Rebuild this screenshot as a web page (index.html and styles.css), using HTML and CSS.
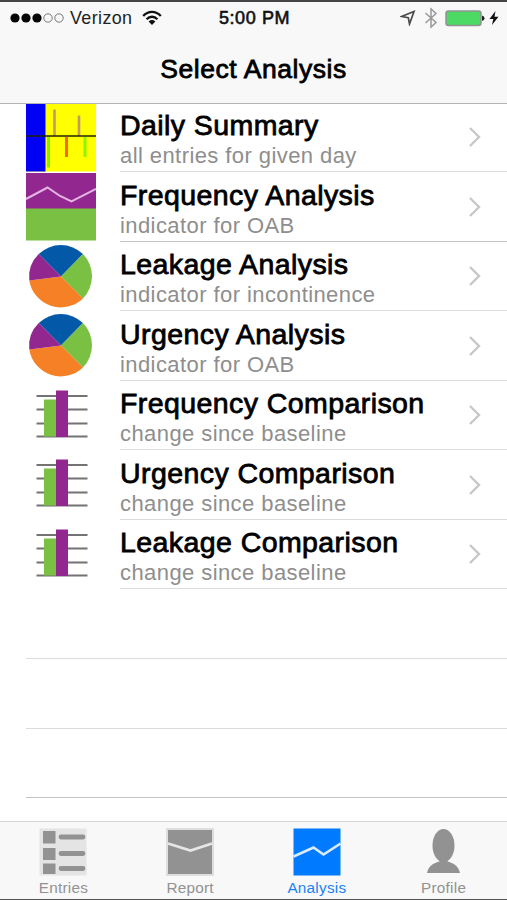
FILE: index.html
```
<!DOCTYPE html>
<html lang="en">
<head>
<meta charset="utf-8">
<title>Select Analysis</title>
<link rel="stylesheet" href="styles.css">
</head>
<body>
<svg class="defs" width="0" height="0">
  <symbol id="chevron" viewBox="0 0 14 22"><path d="M2 2L11 11L2 20" fill="none" stroke="#c7c7cb" stroke-width="2.4"/></symbol>
  <symbol id="daily" viewBox="0 0 70 70">
    <rect width="70" height="68.500" fill="#ff0"/><rect width="19.500" height="68.500" fill="#0000f5"/>
    <path d="M22.500 33V64.500" stroke="#7df000" stroke-width="3"/>
    <path d="M28.500 6.500V33M53 12.500V33" stroke="#c49a62" stroke-width="2.600"/>
    <path d="M40.500 34V54" stroke="#ff6500" stroke-width="3"/>
    <path d="M59 34V54" stroke="#8cf500" stroke-width="3"/>
    <path d="M0 33H70" stroke="#222208" stroke-width="1.600"/>
  </symbol>
  <symbol id="frequency" viewBox="0 0 70 70">
    <rect y="1" width="70" height="36" fill="#92278f"/><rect y="36.500" width="70" height="32" fill="#7ac143"/>
    <path d="M0 27L21.500 15.500L34 24L45.500 29.500L70 17" fill="none" stroke="#e3b5e2" stroke-width="2"/>
  </symbol>
  <symbol id="pie" viewBox="0 0 70 70">
    <path d="M35 34.500L12.700 12A32 32 0 0 1 57 12Z" fill="#0359a8"/>
    <path d="M35 34.500L57 12A32 32 0 0 1 57 56.500Z" fill="#7ac143"/>
    <path d="M35 34.500L57 56.500A32 32 0 0 1 3.300 38.500Z" fill="#f58025"/>
    <path d="M35 34.500L3.300 38.500A32 32 0 0 1 12.700 12Z" fill="#92278f"/>
  </symbol>
  <symbol id="bars" viewBox="0 0 70 70">
    <path d="M10.500 15H61.500M10.500 28.500H61.500M10.500 42.500H61.500M10.500 55.500H61.500" stroke="#737373" stroke-width="2.200"/>
    <rect x="18" y="18.500" width="12.500" height="37" fill="#7ac143"/><rect x="30" y="9.500" width="12" height="46.500" fill="#92278f"/>
  </symbol>
</svg>
<div class="screen">
  <header class="top">
    <div class="status">
      <div class="status-left">
        <svg class="signal" width="55" height="12" viewBox="0 0 55 12"><g fill="#050505"><circle cx="5" cy="6" r="4.600"/><circle cx="16" cy="6" r="4.600"/><circle cx="27" cy="6" r="4.600"/></g><g fill="none" stroke="#777"><circle cx="38" cy="6" r="4.200"/><circle cx="49" cy="6" r="4.200"/></g></svg>
        <span class="carrier">Verizon</span>
        <svg class="wifi" width="20" height="16" viewBox="0 0 20 16"><path d="M1.200 6C6.200 .5 13.800 .5 18.800 6M4.600 9.300C7.800 5.900 12.200 5.900 15.400 9.300" fill="none" stroke="#111" stroke-width="2.300"/><path d="M6.600 11.400Q10 8.500 13.400 11.400L10 15Z" fill="#111"/></svg>
      </div>
      <span class="time">5:00 PM</span>
      <div class="status-right">
        <svg width="16" height="16" viewBox="0 0 16 16"><path d="M1.500 6.500L14 1.500L9.500 14L8.300 7.700Z" fill="none" stroke="#4a4a4a" stroke-width="1.700"/></svg>
        <svg class="bluetooth" width="14" height="22" viewBox="0 0 14 22"><path d="M1.500 6L12 15.500L7 20V2L12 6.500L1.500 16" fill="none" stroke="#999" stroke-width="1.500"/></svg>
        <svg class="battery" width="40" height="17" viewBox="0 0 40 17"><rect x="1" y="1" width="35" height="14.500" rx="2.500" fill="#4cd964" stroke="#929292" stroke-width="1.500"/><path d="M37 5.500Q39.500 6 39.500 8.300T37 11Z" fill="#222"/></svg>
        <svg class="bolt" width="10" height="16" viewBox="0 0 10 16"><path d="M6.500 1L.5 9H4.300L3 15L9.500 6.800H5.500Z" fill="#111"/></svg>
      </div>
    </div>
    <h1 class="title">Select Analysis</h1>
  </header>
  <main class="list">
    <div class="row"><svg class="thumb"><use href="#daily"/></svg><div class="cell"><div><div class="name">Daily Summary</div><div class="detail">all entries for given day</div></div><svg class="chevron"><use href="#chevron"/></svg></div></div>
    <div class="row"><svg class="thumb"><use href="#frequency"/></svg><div class="cell strong"><div><div class="name">Frequency Analysis</div><div class="detail">indicator for OAB</div></div><svg class="chevron"><use href="#chevron"/></svg></div></div>
    <div class="row"><svg class="thumb"><use href="#pie"/></svg><div class="cell"><div><div class="name">Leakage Analysis</div><div class="detail">indicator for incontinence</div></div><svg class="chevron"><use href="#chevron"/></svg></div></div>
    <div class="row"><svg class="thumb"><use href="#pie"/></svg><div class="cell"><div><div class="name">Urgency Analysis</div><div class="detail">indicator for OAB</div></div><svg class="chevron"><use href="#chevron"/></svg></div></div>
    <div class="row"><svg class="thumb"><use href="#bars"/></svg><div class="cell"><div><div class="name">Frequency Comparison</div><div class="detail">change since baseline</div></div><svg class="chevron"><use href="#chevron"/></svg></div></div>
    <div class="row"><svg class="thumb"><use href="#bars"/></svg><div class="cell"><div><div class="name">Urgency Comparison</div><div class="detail">change since baseline</div></div><svg class="chevron"><use href="#chevron"/></svg></div></div>
    <div class="row"><svg class="thumb"><use href="#bars"/></svg><div class="cell"><div><div class="name">Leakage Comparison</div><div class="detail">change since baseline</div></div><svg class="chevron"><use href="#chevron"/></svg></div></div>
    <div class="row"><div class="cell"></div></div>
    <div class="row"><div class="cell"></div></div>
    <div class="row"><div class="cell strong"></div></div>
  </main>
  <nav class="tabs">
    <div class="tab"><svg width="48" height="48" viewBox="0 0 48 48"><rect x=".5" y=".5" width="47" height="47" fill="#e4e4e4"/><path d="M4 3H16.500V15.500H4ZM4 20H16.500V32H4ZM4 35.500H16.500V46H4Z" fill="#929292"/><path d="M22 9H44M22 25.500H44M22 40.500H44" stroke="#929292" stroke-width="4.800" stroke-linecap="round"/></svg><span>Entries</span></div>
    <div class="tab"><svg width="48" height="48" viewBox="0 0 48 48"><rect x="1" y="1" width="46" height="46" fill="#929292" stroke="#dedede" stroke-width="2"/><path d="M2 15.500L24.500 22.500L46 15.500" fill="none" stroke="#e6e6e6" stroke-width="2.800"/></svg><span>Report</span></div>
    <div class="tab active"><svg width="48" height="48" viewBox="0 0 48 48"><rect x=".5" y=".5" width="47" height="47" fill="#007aff"/><path d="M.5 28.500L20.500 19.500L30.500 26.500L47.500 15.500" fill="none" stroke="#d9ecff" stroke-width="2.600"/></svg><span>Analysis</span></div>
    <div class="tab"><svg width="48" height="48" viewBox="0 0 48 48"><ellipse cx="23.500" cy="17.500" rx="11" ry="16.500" fill="#929292"/><path d="M7 45C8.500 37.500 14 35 19.500 33.500V31H27.500V33.500C33 35 38.500 37.500 40 45Z" fill="#929292"/></svg><span>Profile</span></div>
  </nav>
</div>
</body>
</html>
```

FILE: styles.css
```
* { box-sizing: border-box; }
body { margin: 0; background: #fff; font-family: "Liberation Sans", Arial, sans-serif; }
svg { display: block; flex: none; }
.defs { position: absolute; }
.screen { display: flex; flex-direction: column; width: 507px; height: 900px; overflow: hidden; border-top: 2px solid #444; border-bottom: 1.500px solid #555; }
.top { flex: none; height: 102px; background: #f8f8f8; border-bottom: 1.500px solid #b4b4b6; z-index: 1; }
.status { display: grid; grid-template-columns: 1fr auto 1fr; align-items: center; height: 32px; padding: 0 8px 0 10px; font-size: 18px; }
.status-left, .status-right { display: flex; align-items: center; }
.carrier { margin-left: 5px; font-size: 17.900px; letter-spacing: .4px; color: #222; }
.wifi { margin-left: 10px; }
.time { color: #111; letter-spacing: .6px; -webkit-text-stroke: .6px #111; }
.status-right { justify-content: flex-end; }
.bluetooth { margin-left: 8px; }
.battery { margin-left: 7px; }
.bolt { margin-left: 4px; }
.title { margin: 19px 0 0; text-align: center; font-size: 26.500px; line-height: 32px; font-weight: 400; letter-spacing: .55px; -webkit-text-stroke: .8px #000; }
.list { flex: 1; min-height: 0; margin-top: -1.400px; background: #fff; }
.row { display: flex; height: 69.550px; padding-left: 26px; }
.thumb { width: 70px; height: 70px; margin-right: 24px; }
.cell { display: flex; flex: 1; justify-content: space-between; padding: 6.500px 25px 0 0; border-bottom: 1.500px solid #dcdcde; }
.strong { border-bottom-color: #c4c4c6; }
.name { font-size: 28.500px; line-height: 32px; letter-spacing: .42px; color: #000; -webkit-text-stroke: .8px #000; white-space: nowrap; }
.detail { margin-top: 3px; font-size: 22px; line-height: 24px; letter-spacing: .42px; color: #8e8e8e; white-space: nowrap; }
.chevron { width: 14px; height: 22px; margin-top: 17px; }
.tabs { flex: none; display: grid; grid-template-columns: repeat(4, 1fr); height: 78px; background: #f8f8f8; border-top: 1.500px solid #d4d4d5; z-index: 1; }
.tab { display: flex; flex-direction: column; align-items: center; padding-top: 6px; color: #929292; font-size: 15.300px; line-height: 18px; letter-spacing: .25px; }
.tab span { margin-top: 3px; }
.active { color: #1a82f5; }
```
